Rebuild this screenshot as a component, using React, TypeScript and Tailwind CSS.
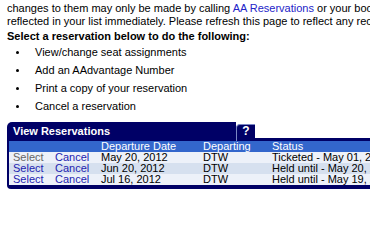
import React from "react";

const rows = [
  { selectGray: true, date: "May 20, 2012", dep: "DTW", status: "Ticketed - May 01, 2012", bg: "bg-[#edf1f9]" },
  { selectGray: false, date: "Jun 20, 2012", dep: "DTW", status: "Held until - May 20, 2012", bg: "bg-[#d6e0ef]" },
  { selectGray: false, date: "Jul 16, 2012", dep: "DTW", status: "Held until - May 19, 2012", bg: "bg-[#edf1f9]" },
];

const bullets = [
  "View/change seat assignments",
  "Add an AAdvantage Number",
  "Print a copy of your reservation",
  "Cancel a reservation",
];

export default function App() {
  return (
    <div className="w-[370px] h-[200px] overflow-hidden bg-white text-black font-['Liberation_Sans',Arial,sans-serif] text-[11px]">
      <div className="w-[720px] pl-[7px] pt-[2px]">
        <div className="leading-[13px] whitespace-nowrap">
          changes to them may only be made by calling{" "}
          <span className="text-[#2323c8]">AA Reservations</span> or your booking agent. Changes made may not be
        </div>
        <div className="leading-[13px] whitespace-nowrap">
          reflected in your list immediately. Please refresh this page to reflect any recent changes.
        </div>
        <div className="mt-[2px] leading-[13px] font-bold whitespace-nowrap">
          Select a reservation below to do the following:
        </div>
        <ul className="leading-[18px]">
          {bullets.map((b) => (
            <li key={b} className="flex items-center whitespace-nowrap">
              <span className="w-[28px] flex items-center">
                <span className="ml-[9px] mt-[1px] w-[3px] h-[3px] rounded-full bg-black" />
              </span>
              <span>{b}</span>
            </li>
          ))}
        </ul>

        <div className="mt-[7px]">
          <div className="flex items-end">
            <div className="w-[229px] h-[19px] bg-[#000066] rounded-tl-[5px] pl-[6px] text-white font-bold text-[11px] leading-[19px] whitespace-nowrap">
              View Reservations
            </div>
            <div className="w-[19px] h-[17px] bg-[#000066] border-l border-t border-[#7a86c4] rounded-tl-[4px] text-white font-bold text-[12px] leading-[12px] text-center">
              ?
            </div>
            <div className="flex-1 h-[3px] bg-[#000066]" />
          </div>
          <div className="border-l-2 border-b-4 border-[#000066] rounded-bl-[4px] overflow-hidden">
            <div className="flex h-[11px] leading-[11px] bg-[#3366cc] text-white pl-[4px] whitespace-nowrap">
              <div className="w-[42px]" />
              <div className="w-[46px]" />
              <div className="w-[102px]">Departure Date</div>
              <div className="w-[69px]">Departing</div>
              <div className="flex-1">Status</div>
            </div>
            {rows.map((r, i) => (
              <div key={i} className={`flex h-[11px] leading-[11px] pl-[4px] whitespace-nowrap ${r.bg}`}>
                <div className={`w-[42px] ${r.selectGray ? "text-[#666666]" : "text-[#1e1eb0]"}`}>Select</div>
                <div className="w-[46px] text-[#1e1eb0]">Cancel</div>
                <div className="w-[102px]">{r.date}</div>
                <div className="w-[69px]">{r.dep}</div>
                <div className="flex-1">{r.status}</div>
              </div>
            ))}
          </div>
        </div>
      </div>
    </div>
  );
}
